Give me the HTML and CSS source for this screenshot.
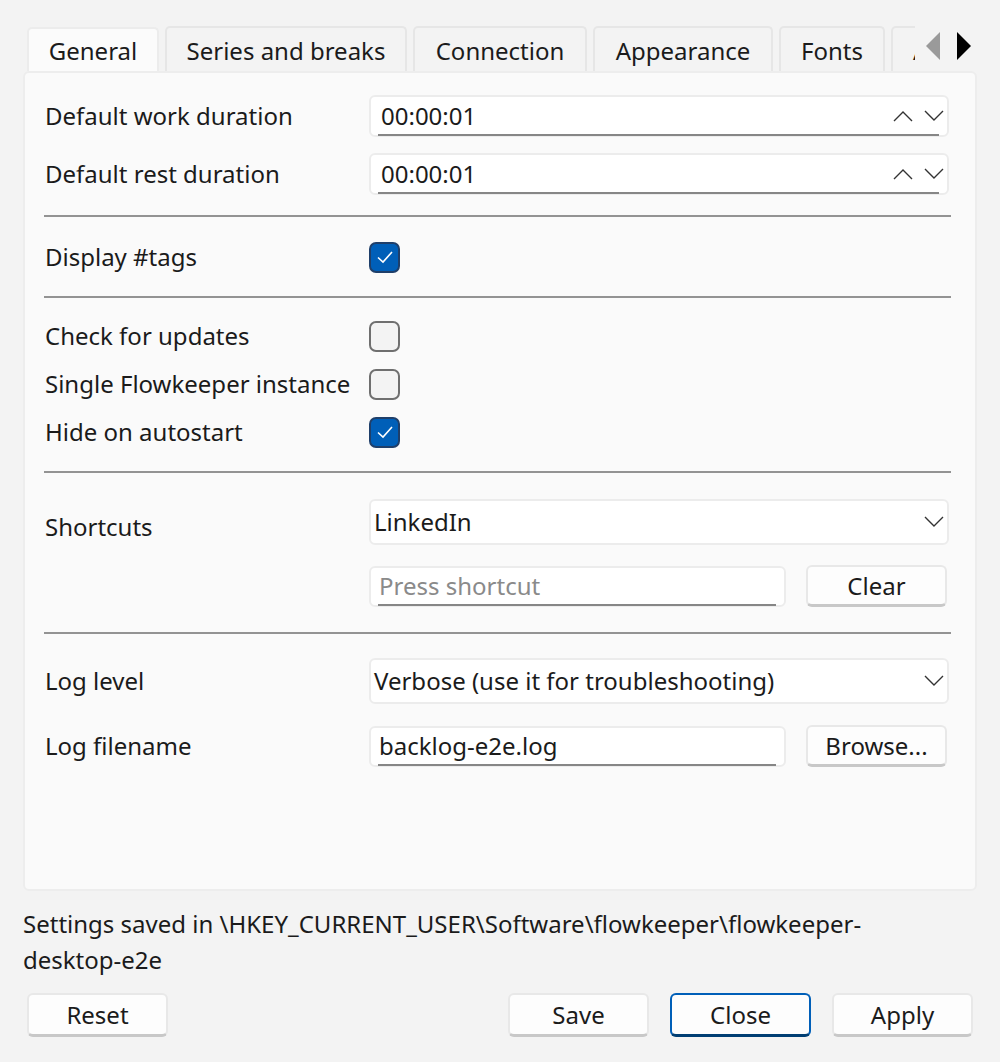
FILE: index.html
```html
<!DOCTYPE html>
<html>
<head>
<meta charset="utf-8">
<link rel="stylesheet" href="styles.css">
</head>
<body>
<div class="dialog">
  <div class="tabbar">
    <div class="tabs">
      <div class="tab tab-general active">General</div>
      <div class="tab tab-series">Series and breaks</div>
      <div class="tab tab-conn">Connection</div>
      <div class="tab tab-appear">Appearance</div>
      <div class="tab tab-fonts">Fonts</div>
      <div class="tab tab-more">Audio</div>
    </div>
    <div class="scrollers">
      <svg class="arrow" width="16" height="28" viewBox="0 0 16 28"><polygon points="15,0 15,28 1,14" fill="#9a9a9a"/></svg>
      <svg class="arrow" width="16" height="28" viewBox="0 0 16 28"><polygon points="1,0 1,28 15,14" fill="#000"/></svg>
    </div>
  </div>
  <div class="panel">
    <div class="row row-spin1">
      <div class="label">Default work duration</div>
      <div class="field spin">
        <span class="value">00:00:01</span>
        <span class="spin-arrows">
          <svg width="20" height="12" viewBox="0 0 20 12"><polyline points="1,11 10,2 19,11" fill="none" stroke="#333" stroke-width="1.4"/></svg>
          <svg width="20" height="12" viewBox="0 0 20 12"><polyline points="1,1 10,10 19,1" fill="none" stroke="#333" stroke-width="1.4"/></svg>
        </span>
        <span class="underline"></span>
      </div>
    </div>
    <div class="row row-spin2">
      <div class="label">Default rest duration</div>
      <div class="field spin">
        <span class="value">00:00:01</span>
        <span class="spin-arrows">
          <svg width="20" height="12" viewBox="0 0 20 12"><polyline points="1,11 10,2 19,11" fill="none" stroke="#333" stroke-width="1.4"/></svg>
          <svg width="20" height="12" viewBox="0 0 20 12"><polyline points="1,1 10,10 19,1" fill="none" stroke="#333" stroke-width="1.4"/></svg>
        </span>
        <span class="underline"></span>
      </div>
    </div>
    <div class="sep sep1"></div>
    <div class="row row-check row-tags">
      <div class="label">Display #tags</div>
      <span class="check checked"><svg width="20" height="16" viewBox="0 0 20 16"><polyline points="3,8.5 8,13 17,3" fill="none" stroke="#fff" stroke-width="1.6"/></svg></span>
    </div>
    <div class="sep sep2"></div>
    <div class="row row-check row-upd">
      <div class="label">Check for updates</div>
      <span class="check"></span>
    </div>
    <div class="row row-check">
      <div class="label">Single Flowkeeper instance</div>
      <span class="check"></span>
    </div>
    <div class="row row-check">
      <div class="label">Hide on autostart</div>
      <span class="check checked"><svg width="20" height="16" viewBox="0 0 20 16"><polyline points="3,8.5 8,13 17,3" fill="none" stroke="#fff" stroke-width="1.6"/></svg></span>
    </div>
    <div class="sep sep3"></div>
    <div class="row row-combo row-shortcuts">
      <div class="label label-low">Shortcuts</div>
      <div class="field combo">
        <span class="value">LinkedIn</span>
        <svg class="chev" width="20" height="12" viewBox="0 0 20 12"><polyline points="1,1 10,10 19,1" fill="none" stroke="#333" stroke-width="1.4"/></svg>
      </div>
    </div>
    <div class="row row-input">
      <div class="label"></div>
      <div class="input-line">
        <div class="field edit"><span class="value placeholder">Press shortcut</span><span class="underline"></span></div>
        <div class="btn btn-side">Clear</div>
      </div>
    </div>
    <div class="sep sep4"></div>
    <div class="row row-combo row-log">
      <div class="label">Log level</div>
      <div class="field combo">
        <span class="value">Verbose (use it for troubleshooting)</span>
        <svg class="chev" width="20" height="12" viewBox="0 0 20 12"><polyline points="1,1 10,10 19,1" fill="none" stroke="#333" stroke-width="1.4"/></svg>
      </div>
    </div>
    <div class="row row-input row-file">
      <div class="label">Log filename</div>
      <div class="input-line">
        <div class="field edit"><span class="value">backlog-e2e.log</span><span class="underline"></span></div>
        <div class="btn btn-side">Browse...</div>
      </div>
    </div>
  </div>
  <div class="saved">
    <span class="saved-line">Settings saved in \HKEY_CURRENT_USER\Software\flowkeeper\flowkeeper-</span>
    <span class="saved-line">desktop-e2e</span>
  </div>
  <div class="buttons">
    <div class="btn btn-main">Reset</div>
    <div class="spacer"></div>
    <div class="btn btn-main">Save</div>
    <div class="btn btn-main btn-default">Close</div>
    <div class="btn btn-main">Apply</div>
  </div>
</div>
</body>
</html>
```

FILE: styles.css
```css
* { box-sizing: border-box; }
html, body {
  margin: 0;
  padding: 0;
  background: #f3f3f3;
}
body {
  font-family: "Noto Sans", "Open Sans", sans-serif;
  font-size: 24px;
  line-height: 32px;
  color: #1b1b1b;
  width: 1000px;
  height: 1062px;
  overflow: hidden;
}
.dialog {
  padding: 26px 23px 0 23px;
}
.tabbar {
  display: flex;
  height: 45px;
  align-items: stretch;
}
.tabs {
  display: flex;
  gap: 6px;
  padding-left: 4px;
  width: 892px;
  overflow: hidden;
  flex: none;
}
.tab {
  flex: none;
  display: flex;
  align-items: center;
  justify-content: center;
  background: #f3f3f3;
  border: 2px solid #e6e6e6;
  border-bottom: none;
  border-radius: 5px 5px 0 0;
  white-space: nowrap;
  padding-top: 2px;
}
.tab.active {
  background: #fbfbfb;
  border-color: #ececec;
  height: 46px;
  margin-top: 1px;
  position: relative;
  z-index: 1;
  padding-top: 0;
}
.tab-general { width: 132px; }
.tab-series { width: 242px; }
.tab-conn { width: 174px; }
.tab-appear { width: 180px; }
.tab-fonts { width: 106px; }
.tab-more { width: 80px; justify-content: flex-start; padding-left: 20px; }
.scrollers {
  display: flex;
  align-items: flex-start;
  padding-top: 6px;
  padding-left: 10px;
  gap: 15px;
}
.arrow { display: block; }

.panel {
  background: #fafafa;
  border: 2px solid #ededed;
  border-radius: 6px;
  height: 820px;
  padding: 22px 26px 0 20px;
  display: flex;
  flex-direction: column;
}
.row {
  display: flex;
  align-items: center;
}
.label {
  width: 324px;
  flex: none;
  white-space: nowrap;
}
.field {
  position: relative;
  flex: 1;
  background: #ffffff;
  border: 2px solid #ececec;
  border-radius: 6px;
  display: flex;
  align-items: center;
}
.value { white-space: nowrap; }
.spin {
  height: 42px;
  padding: 0 3px 0 10px;
}
.spin .value { flex: 1; }
.spin-arrows {
  display: flex;
  gap: 11px;
  align-items: center;
}
.spin-arrows svg { display: block; }
.underline {
  position: absolute;
  left: 7px;
  right: 8px;
  bottom: -1px;
  height: 2px;
  background: #868686;
}
.row-spin2 { margin-top: 16px; }
.sep {
  height: 2px;
  background: #939393;
  margin-left: -1px;
  margin-right: -2px;
  flex: none;
}
.sep1 { margin-top: 20px; }
.row-check { height: 48px; }
.row-tags { margin-top: 16px; }
.sep2 { margin-top: 15px; }
.row-upd { margin-top: 14px; }
.check {
  width: 31px;
  height: 31px;
  border-radius: 7px;
  border: 2px solid #6f6f6f;
  background: #f3f3f3;
  display: flex;
  align-items: center;
  justify-content: center;
}
.check.checked {
  background: #005fb8;
  border-color: #1f3f6a;
}
.check svg { display: block; }
.sep3 { margin-top: 15px; }
.combo {
  height: 46px;
  padding: 0 3px 0 3px;
}
.combo .value { flex: 1; }
.chev { display: block; }
.row-shortcuts { margin-top: 26px; }
.label-low { padding-top: 10px; }
.row-input { margin-top: 20px; }
.input-line {
  flex: 1;
  display: flex;
  gap: 20px;
  align-items: center;
}
.edit {
  height: 41px;
  padding: 0 8px;
}
.placeholder { color: #8a8a8a; }
.btn {
  height: 42px;
  display: flex;
  align-items: center;
  justify-content: center;
  background: #fdfdfd;
  border: 2px solid #e8e8e8;
  border-bottom: 3px solid #c8c8c8;
  border-radius: 6px;
  flex: none;
  white-space: nowrap;
}
.btn-side { width: 141px; margin-right: 2px; }
.sep4 { margin-top: 25px; }
.row-log { margin-top: 24px; }
.row-file { margin-top: 21px; }

.saved {
  margin-top: 15px;
  line-height: 36px;
  display: flex;
  flex-direction: column;
}
.buttons {
  margin-top: 15px;
  display: flex;
  gap: 21px;
  padding: 0 4px;
}
.spacer { flex: 1; }
.btn-main { width: 141px; height: 44px; }
.btn-default {
  border: 2px solid #005fb8;
  border-bottom: 3px solid #003e73;
}
```
